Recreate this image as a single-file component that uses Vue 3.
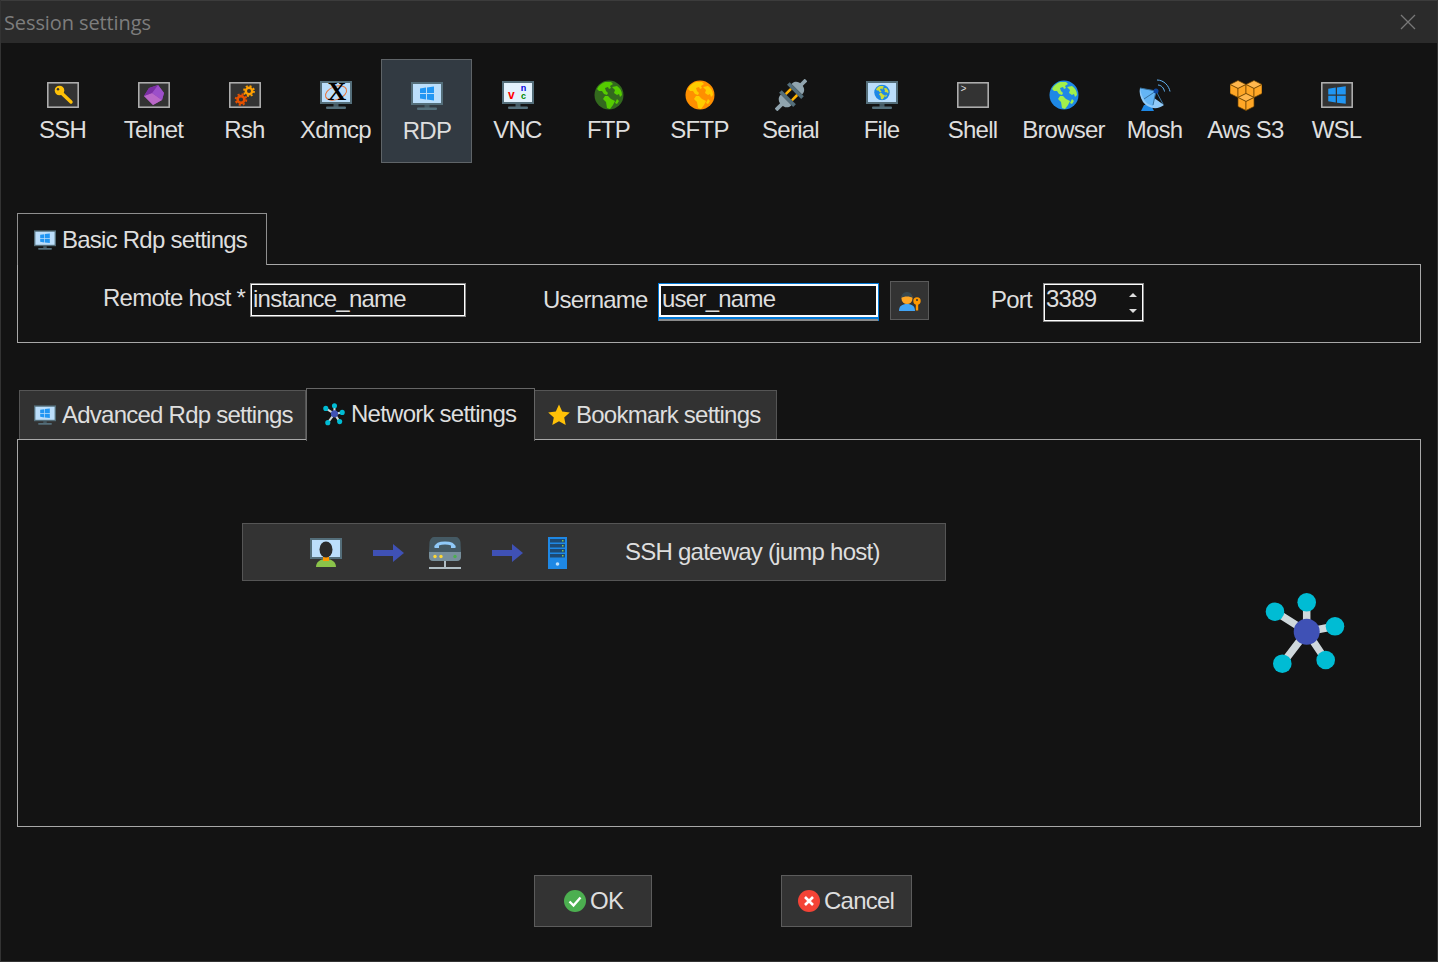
<script setup>
const sessions = [
  { id: 'ssh', label: 'SSH' },
  { id: 'telnet', label: 'Telnet' },
  { id: 'rsh', label: 'Rsh' },
  { id: 'xdmcp', label: 'Xdmcp' },
  { id: 'rdp', label: 'RDP', active: true },
  { id: 'vnc', label: 'VNC' },
  { id: 'ftp', label: 'FTP' },
  { id: 'sftp', label: 'SFTP' },
  { id: 'serial', label: 'Serial' },
  { id: 'file', label: 'File' },
  { id: 'shell', label: 'Shell' },
  { id: 'browser', label: 'Browser' },
  { id: 'mosh', label: 'Mosh' },
  { id: 's3', label: 'Aws S3' },
  { id: 'wsl', label: 'WSL' }
]
</script>

<template>
  <div class="window">
    <svg class="defs" xmlns="http://www.w3.org/2000/svg">
      <defs>
        <symbol id="s-win" viewBox="0 0 16 16">
          <path fill="#2196f3" d="M1 3 7 2v5.500H1zM8 1.900 15 1v6.500H8zM1 8.500h6V14l-6-1zM8 8.500h7V15l-7-.9z" />
        </symbol>
        <symbol id="s-land" viewBox="0 0 32 32">
          <path fill="currentColor" d="M12 3c-3 1-6 3-8 7l2 2 3 0 2 3 3 1 1-2-2-2-1-3 3-1 1 2 2-1-1-2 3-2-2-2zM19 8l3 3-1 3 3 2 2-1 1 3 2-2c0-4-2-7-5-9zM12 17l-2 3 3 3 1 6 3 1 3-4 2-4-4-2-3-3zM24 20l-2 4 2 1 2-3z" />
        </symbol>
        <symbol id="s-box" viewBox="0 0 32 32">
          <rect x="0.800" y="3.800" width="30.400" height="24.400" fill="#333" stroke="#b4b4b4" stroke-width="1.500" />
        </symbol>
        <symbol id="s-monitor" viewBox="0 0 32 32">
          <rect x="0" y="2" width="32" height="23" fill="#546e7a" />
          <rect x="2" y="4" width="28" height="19" fill="#bbdefb" />
          <rect x="13.500" y="25" width="5" height="3" fill="#455a64" />
          <rect x="6" y="27.500" width="20" height="2.500" rx="1" fill="#546e7a" />
        </symbol>
        <symbol id="i-ssh" viewBox="0 0 32 32">
          <use href="#s-box" width="32" height="32" />
          <circle cx="12.500" cy="11.500" r="4.800" fill="#ffc107" />
          <circle cx="11" cy="10.300" r="1.200" fill="#333" />
          <path d="M14.500 14l9.500 9" stroke="#ffc107" stroke-width="3.400" stroke-linecap="round" />
        </symbol>
        <symbol id="i-telnet" viewBox="0 0 32 32">
          <use href="#s-box" width="32" height="32" />
          <path fill="#8e44ad" d="M11 9l9-3 6 8-2 7-9 5-9-9z" />
          <path fill="#ba68c8" d="M6 17l8-3 10 7-9 5z" />
          <path fill="#9c4fc9" d="M14 14l6-8 6 8-2 7z" />
          <path fill="#7b2fa5" d="M11 9l9-3-6 8-8 3z" />
        </symbol>
        <symbol id="i-rsh" viewBox="0 0 32 32">
          <use href="#s-box" width="32" height="32" />
          <g fill="none">
            <circle cx="20" cy="12" r="3.200" stroke="#ffa000" stroke-width="2.400" />
            <circle cx="20" cy="12" r="5" stroke="#ffa000" stroke-width="1.800" stroke-dasharray="2 1.930" />
            <circle cx="12" cy="20.500" r="3.400" stroke="#e65100" stroke-width="2.600" />
            <circle cx="12" cy="20.500" r="5.300" stroke="#e65100" stroke-width="1.900" stroke-dasharray="2.100 2.060" />
          </g>
        </symbol>
        <symbol id="i-xdmcp" viewBox="0 0 32 32">
          <use href="#s-monitor" width="32" height="32" />
          <ellipse cx="16" cy="14" rx="11" ry="6.500" fill="none" stroke="#e8743b" stroke-width="1" transform="rotate(-20 16 14)" />
          <text x="16.500" y="21" text-anchor="middle" font-family="Liberation Serif, serif" font-weight="700" font-size="26" fill="#000">X</text>
        </symbol>
        <symbol id="i-rdp" viewBox="0 0 32 32">
          <use href="#s-monitor" width="32" height="32" />
          <use href="#s-win" x="8" y="5.500" width="16" height="16" />
        </symbol>
        <symbol id="i-vnc" viewBox="0 0 32 32">
          <rect x="0" y="2" width="32" height="23" fill="#546e7a" />
          <rect x="2" y="4" width="28" height="19" fill="#e3f2fd" />
          <rect x="13.500" y="25" width="5" height="3" fill="#455a64" />
          <rect x="6" y="27.500" width="20" height="2.500" rx="1" fill="#546e7a" />
          <text x="9" y="20" text-anchor="middle" font-family="Liberation Sans, sans-serif" font-weight="700" font-size="12" fill="#f00">v</text>
          <text x="21" y="11.500" text-anchor="middle" font-family="Liberation Sans, sans-serif" font-weight="700" font-size="9" fill="#00d">n</text>
          <text x="21" y="19.500" text-anchor="middle" font-family="Liberation Sans, sans-serif" font-weight="700" font-size="9" fill="#080">c</text>
        </symbol>
        <symbol id="i-ftp" viewBox="0 0 32 32">
          <circle cx="16" cy="16" r="14.500" fill="#33691e" />
          <use href="#s-land" width="32" height="32" style="color:#55cc00" />
        </symbol>
        <symbol id="i-sftp" viewBox="0 0 32 32">
          <circle cx="16" cy="16" r="14.500" fill="#ff8f00" />
          <use href="#s-land" width="32" height="32" style="color:#ffcc00" />
        </symbol>
        <symbol id="i-serial" viewBox="0 0 32 32">
          <g transform="rotate(45 16 16) translate(16 16) scale(1.250) translate(-16 -16)">
            <path fill="#90a4ae" d="M10 9.500c0-4 3-5.500 6-5.500s6 1.500 6 5.500z" />
            <rect x="14.500" y="-1" width="3" height="6" fill="#90a4ae" />
            <rect x="8" y="9.500" width="16" height="3" fill="#546e7a" />
            <rect x="11.500" y="12.500" width="2" height="6" fill="#ffb300" />
            <rect x="18.500" y="12.500" width="2" height="6" fill="#ffb300" />
            <rect x="8" y="18.500" width="16" height="3" fill="#546e7a" />
            <path fill="#90a4ae" d="M10 21.500h12c0 4-3 5.500-6 5.500s-6-1.500-6-5.500z" />
            <rect x="14.500" y="26" width="3" height="7" fill="#90a4ae" />
          </g>
        </symbol>
        <symbol id="i-file" viewBox="0 0 32 32">
          <use href="#s-monitor" width="32" height="32" />
          <g transform="translate(8 5.500)">
            <svg width="16" height="16" viewBox="0 0 32 32">
              <circle cx="16" cy="16" r="15.500" fill="#1e88e5" />
              <use href="#s-land" width="32" height="32" style="color:#cddc39" />
            </svg>
          </g>
        </symbol>
        <symbol id="i-shell" viewBox="0 0 32 32">
          <use href="#s-box" width="32" height="32" />
          <text x="3.500" y="13" font-family="Liberation Mono, monospace" font-size="10" fill="#ddd">&gt;</text>
        </symbol>
        <symbol id="i-browser" viewBox="0 0 32 32">
          <circle cx="16" cy="16" r="14.500" fill="#1e88e5" />
          <use href="#s-land" width="32" height="32" style="color:#a2f04b" />
        </symbol>
        <symbol id="i-mosh" viewBox="0 0 32 32">
          <path fill="#1e88e5" d="M5 26h7l3 6H2z" />
          <path fill="#90caf9" d="M1 9 25 26c-6 5-16 4-21-3C1 18 0 13 1 9z" />
          <path fill="#64b5f6" d="M1 9l16 3-3 15-5-2C4 21 2 15 1 9z" />
          <path d="M1 9l16 3M17 12l-3 14M5 20l12-8M17 12l7 13" stroke="#37729f" stroke-width="1" fill="none" />
          <circle cx="17" cy="12" r="2.500" fill="#0d47a1" />
          <path d="M19 6c3 0 6 3 6.500 6.500M18 1c7 0 12 6 13 11.500" stroke="#64b5f6" stroke-width="1" fill="none" />
        </symbol>
        <symbol id="i-s3" viewBox="0 0 32 32">
          <g stroke="#6d4300" stroke-width=".700" stroke-linejoin="round">
            <g id="cube">
              <path fill="#ffb74d" d="M0 5.500l8-4 8 4-8 4z" />
              <path fill="#ffa726" d="M0 5.500l8 4v9l-8-4z" />
              <path fill="#ffa726" d="M16 5.500l-8 4v9l8-4z" />
            </g>
            <use href="#cube" x="16" />
            <use href="#cube" x="8" y="13" />
          </g>
        </symbol>
        <symbol id="i-wsl" viewBox="0 0 32 32">
          <use href="#s-box" width="32" height="32" />
          <use href="#s-win" x="6" y="6" width="20" height="20" />
        </symbol>
        <symbol id="i-net" viewBox="0 0 80 84">
          <g stroke="#cfd8dc" stroke-width="7.500">
            <path d="M41.700 39.700 41.700 10.300M41.700 39.700 10 19.700M41.700 39.700 70 34.300M41.700 39.700 17.300 71.700M41.700 39.700 60.700 68" />
          </g>
          <g fill="#00bcd4">
            <circle cx="41.700" cy="10.300" r="9.300" />
            <circle cx="10" cy="19.700" r="9.300" />
            <circle cx="70" cy="34.300" r="9.300" />
            <circle cx="17.300" cy="71.700" r="9.300" />
            <circle cx="60.700" cy="68" r="9.300" />
          </g>
          <circle cx="41.700" cy="39.700" r="13" fill="#3f51b5" />
        </symbol>
        <symbol id="i-star" viewBox="0 0 24 24">
          <path fill="#ffc107" d="M12 1.500l3.200 7 7.600.9-5.600 5.200 1.500 7.500L12 18.300l-6.700 3.800 1.500-7.500L1.200 9.400l7.600-.9z" />
        </symbol>
        <symbol id="i-arrow" viewBox="0 0 31 18">
          <path fill="#3f51b5" d="M0 6h20V0l11 9-11 9v-6H0z" />
        </symbol>
        <symbol id="i-user-screen" viewBox="0 0 32 29">
          <rect x="0" y="0" width="32" height="21" fill="#546e7a" />
          <rect x="2" y="2" width="28" height="17" fill="#bbdefb" />
          <path fill="#8bc34a" d="M6 29c0-5 4-8 10-8s10 3 10 8z" />
          <rect x="13" y="18" width="6" height="5" fill="#ff9800" />
          <ellipse cx="16" cy="11.500" rx="6.500" ry="8" fill="#2b2b2b" />
        </symbol>
        <symbol id="i-router" viewBox="0 0 32 32">
          <path fill="#455a64" d="M5 0h22c2 0 4 2 4.500 5L32 15H0l.5-10C1 2 3 0 5 0z" />
          <path fill="none" stroke="#90caf9" stroke-width="3" d="M7 10c1-5.500 17-5.500 18 0" />
          <path fill="#90caf9" d="M5.500 8.500h4.500V11H5.500zM22 8.500h4.500V11H22z" />
          <path fill="#78909c" d="M0 15h32v5c0 2-1 4-4 4H4c-3 0-4-2-4-4z" />
          <circle cx="6" cy="19.500" r="1.700" fill="#fdd835" />
          <circle cx="12" cy="19.500" r="1.700" fill="#fdd835" />
          <circle cx="26" cy="19.500" r="1.700" fill="#4caf50" />
          <rect x="15" y="24" width="2" height="6" fill="#b0bec5" />
          <rect x="0" y="30" width="32" height="2" fill="#b0bec5" />
        </symbol>
        <symbol id="i-server" viewBox="0 0 19 32">
          <rect width="19" height="32" fill="#1e88e5" />
          <g fill="#1e4a73">
            <rect x="2" y="2" width="15" height="3.500" />
            <rect x="2" y="7" width="15" height="3.500" />
            <rect x="2" y="12" width="15" height="3.500" />
            <rect x="2" y="17" width="15" height="3.500" />
          </g>
          <g fill="#8bc34a">
            <rect x="14" y="3" width="1.500" height="1.500" />
            <rect x="14" y="8" width="1.500" height="1.500" />
            <rect x="14" y="13" width="1.500" height="1.500" />
            <rect x="14" y="18" width="1.500" height="1.500" />
          </g>
          <circle cx="9.500" cy="27" r="1.800" fill="#bbdefb" />
        </symbol>
        <symbol id="i-user-key" viewBox="0 0 22 20">
          <path fill="#42a5f5" d="M0 20c0-5 3-7 8-7s8 2 8 7z" />
          <circle cx="8" cy="7.500" r="5.500" fill="#ffa726" />
          <path fill="#37474f" d="M2.500 7c0-4 2.500-6 5.500-6s5.500 2 5.500 6c-2-2-9-2-11 0z" />
          <circle cx="18" cy="10" r="3.700" fill="#ff9800" />
          <rect x="16.800" y="12" width="2.400" height="7.500" fill="#ff9800" />
          <circle cx="18" cy="9" r="1" fill="#333" />
        </symbol>
      </defs>
    </svg>

    <header class="titlebar">
      <span class="title">Session settings</span>
      <svg class="close" width="16" height="16" viewBox="0 0 16 16">
        <path d="M1 1l14 14M15 1 1 15" stroke="#787878" stroke-width="1.300" />
      </svg>
    </header>

    <main class="body">
      <nav class="sessions">
        <div v-for="s in sessions" :key="s.id" class="tile" :class="{ active: s.active }">
          <svg class="tile-icon" width="32" height="32"><use :href="'#i-' + s.id" width="32" height="32" /></svg>
          <span class="tile-label">{{ s.label }}</span>
        </div>
      </nav>

      <section class="basic">
        <div class="tabs tabs-basic">
          <div class="tab tab-basic">
            <svg width="22" height="22"><use href="#i-rdp" width="22" height="22" /></svg>
            <span>Basic Rdp settings</span>
          </div>
        </div>
        <div class="frame frame-basic">
          <span class="label label-host">Remote host *</span>
          <div class="field field-host">instance_name</div>
          <span class="label label-user">Username</span>
          <div class="field-focus">
            <div class="field field-user">user_name</div>
          </div>
          <button class="user-btn" type="button">
            <svg width="22" height="20"><use href="#i-user-key" width="22" height="20" /></svg>
          </button>
          <span class="label label-port">Port</span>
          <div class="field field-port">
            <span>3389</span>
            <span class="spin">
              <i class="up"></i>
              <i class="down"></i>
            </span>
          </div>
        </div>
      </section>

      <section class="advanced">
        <div class="tabs tabs-adv">
          <div class="tab tab-off tab-adv">
            <svg width="22" height="22"><use href="#i-rdp" width="22" height="22" /></svg>
            <span>Advanced Rdp settings</span>
          </div>
          <div class="tab tab-on">
            <svg width="22" height="23"><use href="#i-net" width="22" height="23" /></svg>
            <span>Network settings</span>
          </div>
          <div class="tab tab-off tab-book">
            <svg width="24" height="24"><use href="#i-star" width="24" height="24" /></svg>
            <span>Bookmark settings</span>
          </div>
        </div>
        <div class="frame frame-adv">
          <div class="gateway">
            <svg class="gw-user" width="32" height="29"><use href="#i-user-screen" width="32" height="29" /></svg>
            <svg class="gw-arrow" width="31" height="18"><use href="#i-arrow" width="31" height="18" /></svg>
            <svg class="gw-router" width="32" height="32"><use href="#i-router" width="32" height="32" /></svg>
            <svg class="gw-arrow" width="31" height="18"><use href="#i-arrow" width="31" height="18" /></svg>
            <svg class="gw-server" width="19" height="32"><use href="#i-server" width="19" height="32" /></svg>
            <span class="gw-text">SSH gateway (jump host)</span>
          </div>
          <svg class="net-big" width="80" height="84"><use href="#i-net" width="80" height="84" /></svg>
        </div>
      </section>

      <footer class="actions">
        <button class="btn btn-ok" type="button">
          <svg width="22" height="22" viewBox="0 0 22 22">
            <circle cx="11" cy="11" r="11" fill="#4caf50" />
            <path d="M5.500 11.500l4 4 7-8" fill="none" stroke="#fff" stroke-width="2.400" />
          </svg>
          <span>OK</span>
        </button>
        <button class="btn btn-cancel" type="button">
          <svg width="22" height="22" viewBox="0 0 22 22">
            <circle cx="11" cy="11" r="11" fill="#f44336" />
            <path d="M7 7l8 8M15 7l-8 8" fill="none" stroke="#fff" stroke-width="2.600" />
          </svg>
          <span>Cancel</span>
        </button>
      </footer>
    </main>
  </div>
</template>

<style scoped>
.defs { display: none; }
.window {
  width: 1438px;
  height: 962px;
  box-sizing: border-box;
  background: #131313;
  border-left: 1px solid #333;
  border-right: 1px solid #333;
  border-bottom: 1px solid #333;
  font-family: "Liberation Sans", Arial, sans-serif;
  font-size: 24px;
  letter-spacing: -0.76px;
  color: #dedede;
  overflow: hidden;
}
.titlebar {
  height: 43px;
  box-sizing: border-box;
  background: #2b2b2b;
  border-top: 1px solid #3c3c3c;
  display: flex;
  align-items: center;
  justify-content: space-between;
  padding: 0 21px 0 3px;
}
.title {
  font-family: "Open Sans", "Noto Sans", sans-serif;
  font-size: 20px;
  letter-spacing: -0.1px;
  color: #7d7d7d;
}
.body { padding: 16px 16px 0; }
.sessions { display: flex; }
.tile {
  width: 91px;
  height: 104px;
  box-sizing: border-box;
  padding-top: 20px;
  display: flex;
  flex-direction: column;
  align-items: center;
  border: 1px solid transparent;
}
.tile.active {
  background: #323a42;
  border-color: #5f6468;
  padding: 21px 0 0 1px;
}
.tile-icon { display: block; margin-top: -1px; }
.tile-label { line-height: 26px; margin-top: 6px; white-space: nowrap; }
.tabs { display: flex; align-items: flex-end; }
.basic { margin-top: 50px; }
.tab {
  box-sizing: border-box;
  display: flex;
  align-items: center;
  white-space: nowrap;
}
.tab-basic {
  width: 250px;
  height: 52px;
  margin-bottom: -1px;
  padding-left: 16px;
  gap: 6px;
  border: 1px solid #8f8f8f;
  border-bottom: none;
  background: #131313;
  position: relative;
  z-index: 1;
}
.frame {
  border: 1px solid #a8a8a8;
  box-sizing: border-box;
  width: 1404px;
}
.frame-basic {
  height: 79px;
  display: flex;
  align-items: flex-start;
  padding: 18px 0 0 85px;
}
.label { line-height: 30px; white-space: nowrap; }
.label-host { width: 147px; }
.label-user { width: 115px; margin: 2px 0 0 77px; }
.label-port { width: 52px; margin: 2px 0 0 62px; }
.field {
  box-sizing: border-box;
  border: 1px solid #8a8a8a;
  box-shadow: inset 0 0 0 1px #fff;
  line-height: 30px;
  padding-left: 2px;
  white-space: nowrap;
}
.field-host { width: 216px; height: 34px; }
.field-focus {
  width: 221px;
  height: 38px;
  box-sizing: border-box;
  border: 1px solid #0078d7;
  border-bottom: none;
  display: flex;
  flex-direction: column;
  box-shadow: inset 0 -2px 0 #8a8a8a;
}
.field-user {
  height: 33px;
  border: 2px solid #fff;
  box-shadow: 0 1px 0 1px #0078d7;
  line-height: 26px;
  padding-left: 1px;
}
.user-btn {
  width: 39px;
  height: 39px;
  margin: -2px 0 0 11px;
  padding: 0;
  background: #333;
  border: 1px solid #5a5a5a;
  display: flex;
  align-items: center;
  justify-content: center;
}
.field-port {
  width: 101px;
  height: 39px;
  display: flex;
  justify-content: space-between;
  padding-right: 6px;
}
.spin {
  display: flex;
  flex-direction: column;
  align-items: center;
  justify-content: center;
  gap: 12px;
}
.spin i { display: block; width: 0; height: 0; border-left: 4px solid transparent; border-right: 4px solid transparent; }
.spin .up { border-bottom: 4px solid #ddd; }
.spin .down { border-top: 4px solid #ddd; }
.advanced { margin-top: 45px; }
.tabs-adv { padding-left: 2px; }
.tab-off {
  height: 49px;
  background: #323232;
  border: 1px solid #555;
  border-bottom: none;
}
.tab-adv { width: 287px; padding-left: 14px; gap: 6px; }
.tab-book { width: 242px; padding-left: 12px; gap: 5px; border-left: none; }
.tab-on {
  width: 229px;
  height: 53px;
  margin-bottom: -2px;
  padding: 0 0 2px 16px;
  gap: 6px;
  background: #131313;
  border: 1px solid #666;
  border-bottom: none;
  position: relative;
  z-index: 1;
}
.frame-adv {
  height: 388px;
  display: flex;
  flex-direction: column;
  padding-top: 83px;
}
.gateway {
  width: 704px;
  height: 58px;
  box-sizing: border-box;
  margin-left: 224px;
  padding-left: 67px;
  background: #333;
  border: 1px solid #555;
  display: flex;
  align-items: center;
}
.gw-user { margin-top: 1px; }
.gw-arrow { margin-left: 31px; margin-top: 1px; }
.gw-router { margin-left: 25px; margin-top: 1px; }
.gw-server { margin-left: 25px; margin-top: 1px; }
.gw-text { margin-left: 58px; white-space: nowrap; }
.net-big { align-self: flex-end; margin: 11px 75px 0 0; display: block; }
.actions {
  display: flex;
  margin-top: 48px;
  padding-left: 517px;
  gap: 129px;
}
.btn {
  height: 52px;
  box-sizing: border-box;
  background: #333;
  border: 1px solid #5c5c5c;
  color: #dedede;
  font: inherit;
  letter-spacing: inherit;
  display: flex;
  align-items: center;
  padding: 0;
  gap: 4px;
}
.btn-ok { width: 118px; padding-left: 29px; }
.btn-cancel { width: 131px; padding-left: 16px; }
</style>
